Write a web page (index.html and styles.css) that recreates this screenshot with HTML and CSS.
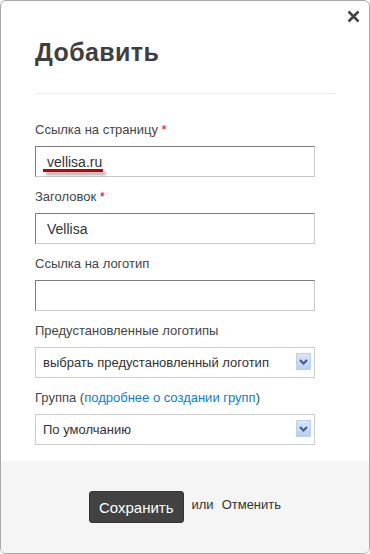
FILE: index.html
```html
<!DOCTYPE html>
<html lang="ru">
<head>
  <meta charset="UTF-8">
  <title>Добавить</title>
  <link rel="stylesheet" href="styles.css">
</head>
<body>
  <div class="dialog">
    <a class="close" href="#" title="Закрыть">
      <svg width="13" height="13" viewBox="0 0 13 13"><path d="M1.5 1.5 L11.5 11.5 M11.5 1.5 L1.5 11.5" stroke="#444" stroke-width="2.6" fill="none"/></svg>
    </a>

    <div class="dialog-body">
      <h2 class="title">Добавить</h2>
      <div class="divider"></div>

      <div class="field">
        <label>Ссылка на страницу <span class="req">*</span></label>
        <div class="input-wrap">
          <input type="text" class="text-input" value="vellisa.ru">
          <span class="spell-mark"></span>
        </div>
      </div>

      <div class="field">
        <label>Заголовок <span class="req">*</span></label>
        <input type="text" class="text-input" value="Vellisa">
      </div>

      <div class="field">
        <label>Ссылка на логотип</label>
        <input type="text" class="text-input" value="">
      </div>

      <div class="field">
        <label>Предустановленные логотипы</label>
        <div class="select-wrap">
          <select class="select-input">
            <option>выбрать предустановленный логотип</option>
          </select>
          <span class="select-arrow">
            <svg width="9" height="6" viewBox="0 0 9 6"><path d="M1 1 L4.5 4.5 L8 1" stroke="#4a5a78" stroke-width="2" fill="none"/></svg>
          </span>
        </div>
      </div>

      <div class="field">
        <label>Группа (<a href="#" class="link">подробнее о создании групп</a>)</label>
        <div class="select-wrap">
          <select class="select-input">
            <option>По умолчанию</option>
          </select>
          <span class="select-arrow">
            <svg width="9" height="6" viewBox="0 0 9 6"><path d="M1 1 L4.5 4.5 L8 1" stroke="#4a5a78" stroke-width="2" fill="none"/></svg>
          </span>
        </div>
      </div>
    </div>

    <div class="dialog-footer">
      <button class="btn-save">Сохранить</button>
      <span class="or">или</span>
      <a href="#" class="cancel">Отменить</a>
    </div>
  </div>
</body>
</html>
```

FILE: styles.css
```css
body {
  margin: 0;
  font-family: "Liberation Sans", Arial, sans-serif;
  background: #fff;
}

.dialog {
  position: relative;
  width: 370px;
  height: 554px;
  box-sizing: border-box;
  border: 1px solid #a8a8a8;
  border-radius: 6px;
  overflow: hidden;
  display: flex;
  flex-direction: column;
  background: #fff;
}

.close {
  position: absolute;
  top: 9px;
  right: 9px;
  width: 13px;
  height: 13px;
  display: block;
}

.close svg {
  display: block;
}

.dialog-body {
  flex: 1;
  padding: 0 34px;
}

.title {
  margin: 37px 0 0;
  font-size: 25px;
  line-height: 28px;
  font-weight: bold;
  letter-spacing: 0.4px;
  color: #3f3f3f;
}

.divider {
  margin-top: 27px;
  height: 1px;
  background: #ececec;
}

.field {
  margin-bottom: 12px;
}

.divider + .field {
  margin-top: 28px;
}

label {
  display: block;
  font-size: 13px;
  line-height: 16px;
  color: #454545;
  margin-bottom: 8px;
}

.req {
  color: #e00000;
}

.link {
  color: #0a7fd8;
  text-decoration: none;
}

.text-input {
  display: block;
  width: 280px;
  height: 31px;
  box-sizing: border-box;
  padding: 0 10px 0 11px;
  border: 1px solid #c9c9c9;
  border-top-color: #7d7d7d;
  border-left-color: #7d7d7d;
  font-family: "Liberation Sans", Arial, sans-serif;
  font-size: 14px;
  color: #333;
  background: #fff;
  outline: none;
}

.input-wrap,
.select-wrap {
  position: relative;
  width: 280px;
}

.spell-mark {
  position: absolute;
  left: 8px;
  top: 23px;
  width: 60px;
  height: 3px;
  background: #c40000;
  box-shadow: 3px 3px 3px rgba(0, 0, 0, 0.35);
}

.select-input {
  display: block;
  width: 280px;
  height: 31px;
  box-sizing: border-box;
  padding: 0 24px 0 7px;
  border: 1px solid #cdcdcd;
  border-radius: 0;
  font-family: "Liberation Sans", Arial, sans-serif;
  font-size: 13px;
  color: #333;
  background: #fff;
  -webkit-appearance: none;
  appearance: none;
  outline: none;
}

.select-arrow {
  position: absolute;
  top: 6px;
  right: 4px;
  width: 15px;
  height: 17px;
  box-sizing: border-box;
  border: 1px solid #bcd0f0;
  background: linear-gradient(#d6e4fb, #b9cff4);
  display: flex;
  align-items: center;
  justify-content: center;
  pointer-events: none;
}

.select-arrow svg {
  display: block;
}

.dialog-footer {
  height: 92px;
  box-sizing: border-box;
  padding-top: 30px;
  background: #f5f5f5;
  display: flex;
  justify-content: center;
  align-items: flex-start;
  gap: 8px;
}

.btn-save {
  height: 32px;
  padding: 0 9px;
  border: 1px solid #333;
  border-radius: 3px;
  background: #424242;
  color: #fff;
  font-family: "Liberation Sans", Arial, sans-serif;
  font-size: 15px;
  cursor: pointer;
}

.or,
.cancel {
  font-size: 13px;
  line-height: 16px;
  margin-top: 6px;
  color: #333;
}

.cancel {
  text-decoration: none;
}
```
